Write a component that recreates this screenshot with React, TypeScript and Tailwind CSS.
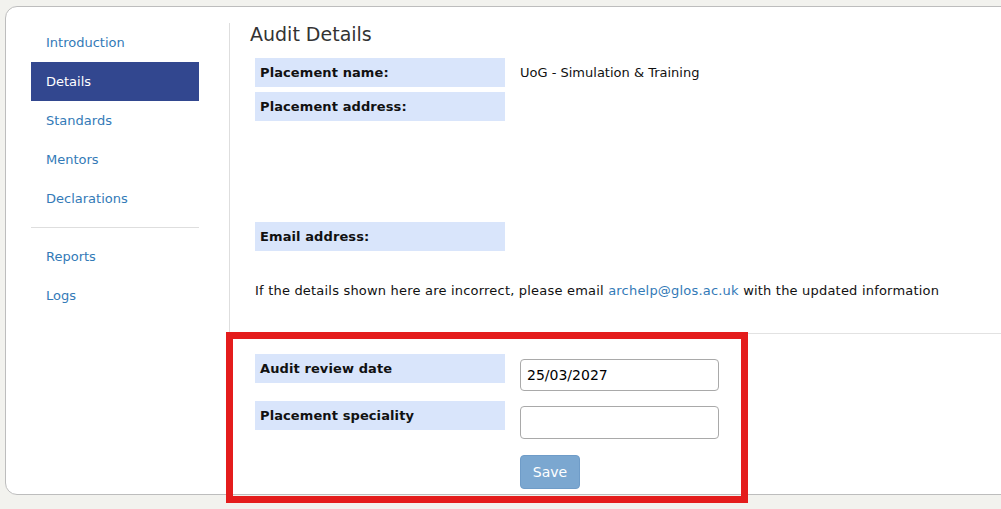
import React from 'react';

// Left navigation entries; null marks the divider
const navItems: (string | null)[] = ['Introduction', 'Details', 'Standards', 'Mentors', 'Declarations', null, 'Reports', 'Logs'];

const Label = ({ children }: { children: React.ReactNode }) => (
    <div className="flex h-[29px] w-[250px] items-center bg-[#d9e5fb] px-[5px] font-bold tracking-[0.1px] text-[#111]">
        {children}
    </div>
);

const App = () => {
    return (
        <div className="relative h-[509px] w-[1001px] overflow-hidden bg-[#f2f2ee] pl-[5px] pt-[6px] font-['DejaVu_Sans',Verdana,sans-serif] text-[13px] text-[#111]">
            <div className="flex h-[489px] w-[1030px] rounded-l-[12px] border border-[#bdbdbd] bg-white">
                {/* Sidebar */}
                <div className="w-[223px] shrink-0 pl-[25px] pr-[30px] pt-[16px]">
                    {navItems.map((item, i) =>
                        item === null ? (
                            <div key={i} className="my-[9px] h-px bg-[#dedede]" />
                        ) : (
                            <div
                                key={item}
                                className={`flex h-[39px] items-center px-[15px] ${
                                    item === 'Details' ? 'bg-[#32478f] text-white' : 'text-[#337ab7]'
                                }`}
                            >
                                {item}
                            </div>
                        ),
                    )}
                </div>

                {/* Main content */}
                <div className="flex flex-1 flex-col pt-[16px]">
                    <div className="h-[310px] border-l border-[#dedede] pl-[20px]">
                        <h1 className="-mt-px text-[19px] leading-[24px] text-[#333]">Audit Details</h1>
                        <div className="ml-[5px] mt-[12px] grid grid-cols-[250px_1fr] gap-x-[15px] gap-y-[5px]">
                            <Label>Placement name:</Label>
                            <div className="flex h-[29px] items-center">UoG - Simulation &amp; Training</div>
                            <div className="h-[125px]">
                                <Label>Placement address:</Label>
                            </div>
                            <div />
                            <Label>Email address:</Label>
                            <div />
                        </div>
                        <p className="ml-[5px] mt-[31px] leading-[18px] tracking-[0.2px]">
                            If the details shown here are incorrect, please email{' '}
                            <span className="text-[#337ab7]">archelp@glos.ac.uk</span> with the updated information
                        </p>
                    </div>

                    <div className="flex-1 border-t border-[#e2e2e2] pl-[26px] pt-[20px]">
                        <div className="flex h-[47px] gap-[15px]">
                            <Label>Audit review date</Label>
                            <input
                                readOnly
                                value="25/03/2027"
                                className="mt-[5px] h-[32px] w-[199px] rounded-[4px] border border-[#a9a9a9] px-[6px] text-[14px] text-black outline-none"
                            />
                        </div>
                        <div className="flex h-[54px] gap-[15px]">
                            <Label>Placement speciality</Label>
                            <input
                                readOnly
                                value=""
                                className="mt-[5px] h-[33px] w-[199px] rounded-[4px] border border-[#a9a9a9] px-[6px] text-[14px] outline-none"
                            />
                        </div>
                        <div className="ml-[265px]">
                            <button className="h-[34px] w-[60px] rounded-[4px] border border-[#6f9cc8] bg-[#7ba7d0] text-[14px] text-white">
                                Save
                            </button>
                        </div>
                    </div>
                </div>
            </div>

            {/* Red highlight annotation */}
            <div className="absolute left-[226px] top-[332px] h-[171px] w-[522px] border-[7px] border-[#e41c1c]" />
        </div>
    );
};

export default App;
